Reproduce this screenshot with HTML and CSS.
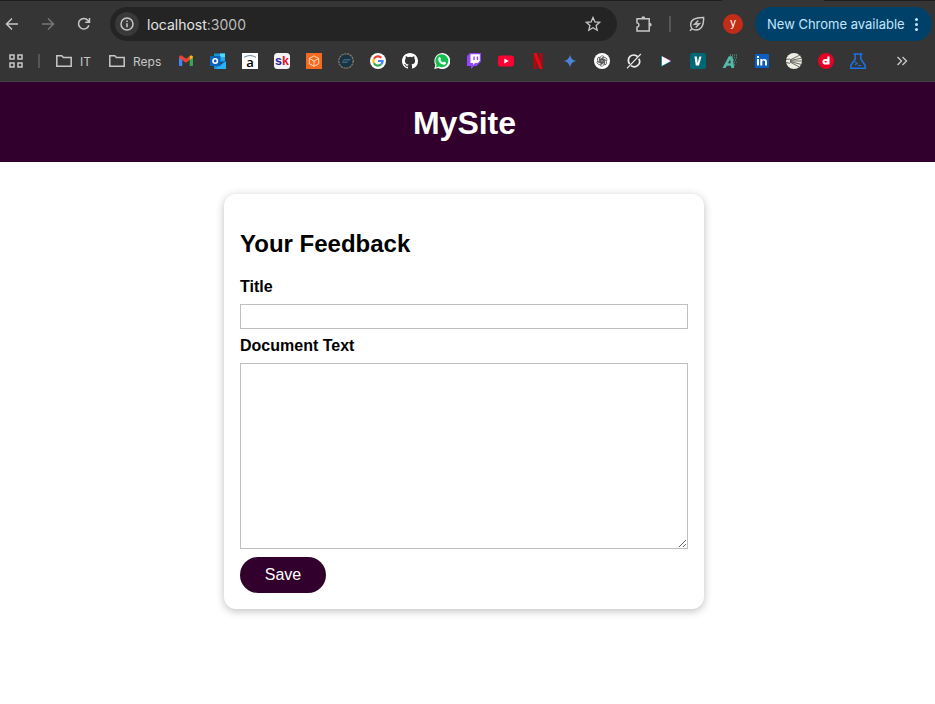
FILE: index.html
```html
<!DOCTYPE html>
<html lang="en">
<head>
<meta charset="utf-8">
<title>MySite</title>
<link rel="stylesheet" href="styles.css">
</head>
<body>
<div class="browser">
  <div class="toolbar">
    <div class="nav">
      <svg class="ic" viewBox="0 0 16 16"><path d="M14 8H3M8 2.500 2.500 8 8 13.500"/></svg>
      <svg class="ic dim" viewBox="0 0 16 16"><path d="M2 8h11M8 2.500 13.500 8 8 13.500"/></svg>
      <svg class="ic" viewBox="0 0 16 16"><path d="M12.900 9.300A5.300 5.300 0 1 1 12 4.500l1.200 1.500M13.500 2v4.200H9.300"/></svg>
    </div>
    <div class="address">
      <span class="info"><svg class="ic" viewBox="0 0 16 16"><circle cx="8" cy="8" r="6"/><path d="M8 7.300v3.900M8 4.500v1.500"/></svg></span>
      <span class="url">localhost<span class="port">:3000</span></span>
      <svg class="ic star" viewBox="0 0 16 16"><path d="M8 1.500l1.900 4.400 4.800.4-3.600 3.200 1.100 4.700L8 11.700l-4.200 2.500 1.100-4.700L1.300 6.300l4.800-.4z"/></svg>
    </div>
    <svg class="puzzle" viewBox="0 0 18 18"><path d="M2 3.800h12.200v12.200H2v-3.800c2.600-.4 2.600-4 0-4.400z"/><path class="knob" d="M6.400 3.500a1.900 2.200 0 0 1 3.800 0zM14.500 7.800a2.200 1.900 0 0 1 0 3.800z"/></svg>
    <span class="divider"></span>
    <svg class="leaf" viewBox="0 0 16 16"><path d="M14.600 1.500C6 1.300 1.700 3.800 1.700 8.900c0 2.900 2.300 5 5.300 5 5.400 0 7.800-4.500 7.600-12.400zM1 14.800l2.200-2.300"/><path d="M9.300 4.600 5.700 8.300l4.600-.6-3.600 3.800"/></svg>
    <span class="avatar">y</span>
    <div class="update"><span>New Chrome available</span><i class="dots"></i></div>
  </div>
  <div class="bookmarks">
    <svg class="fav apps" viewBox="0 0 16 16"><path d="M2 2h4v4H2zM10 2h4v4h-4zM2 10h4v4H2zM10 10h4v4h-4z"/></svg>
    <span class="divider short"></span>
    <div class="folder f1"><svg viewBox="0 0 16 14"><path d="M.8 1.700h5l1.600 1.700h7.800v8.900H.8z"/></svg>IT</div>
    <div class="folder f2"><svg viewBox="0 0 16 14"><path d="M.8 1.700h5l1.600 1.700h7.800v8.900H.8z"/></svg>Reps</div>
    <div class="favs">
      <svg class="fav" viewBox="0 0 16 16"><path fill="#4285f4" d="M1 4l3.300 2.400v6.700H2a1 1 0 0 1-1-1z"/><path fill="#34a853" d="M11.700 6.400 15 4v8.100a1 1 0 0 1-1 1h-2.300z"/><path fill="#ea4335" d="M1 4.400C1 2.600 2.900 2 4.300 3L8 5.800 11.700 3v3.900L8 9.700 1 4.800z"/><path fill="#fbbc04" d="M11.700 3C13.100 2 15 2.600 15 4.400l-3.300 2.500z"/></svg>
      <svg class="fav" viewBox="0 0 16 16"><path fill="#1493df" d="M4 .5h11V9H4z"/><path fill="#50d9ff" d="M10 .5h5V4.500h-5z"/><path fill="#28a8ea" d="M10 4.500h5v4h-5z"/><path fill="#0a63bd" d="M9 8.500 15 8v3z"/><path fill="#1490df" d="M4 9l6 3 6-4v8H4z"/><path fill="#2cb1f0" d="M5 16l11-7.500V16z"/><path fill="#0a63bd" d="M0 3h10.500v10H0z"/><circle cx="5.200" cy="8" r="2.200" fill="none" stroke="#fff" stroke-width="1.600"/></svg>
      <svg class="fav" viewBox="0 0 16 16"><path fill="#fff" d="M0 0h16v16H0z"/><path d="M2 4.300Q8 .8 14 4.300" fill="none" stroke="#688ca3"/><text x="8" y="13.500" class="g a">a</text></svg>
      <svg class="fav" viewBox="0 0 16 16"><rect width="16" height="16" rx="3.500" fill="#f4f4f6"/><text x="8" y="12.200" class="g sk"><tspan fill="#272399">s</tspan><tspan fill="#e3132c">k</tspan></text></svg>
      <svg class="fav" viewBox="0 0 16 16"><path fill="#f26b21" d="M0 0h16v16H0z"/><path d="M8 2.800l4.700 2.600v5.300L8 13.300l-4.700-2.600V5.400zM3.300 5.400 8 8l4.700-2.600M8 8v5.300" fill="none" stroke="#ffd8b9"/></svg>
      <svg class="fav" viewBox="0 0 16 16"><circle cx="8" cy="8" r="7.200" fill="#173346" stroke="#8f8068" stroke-width="1.200" stroke-dasharray="2.200 .7"/><path d="M4.500 9.500l1.500-3h6.500M5.500 8h5l1.500-1.500M4 9.500h5.500" fill="none" stroke="#4c6c7e" stroke-width=".8"/></svg>
      <svg class="fav" viewBox="0 0 16 16"><circle cx="8" cy="8" r="8" fill="#fff"/><g fill="none" stroke-width="2.200"><path stroke="#ea4335" d="M4 5.700A4.600 4.600 0 0 1 11.300 4.800"/><path stroke="#fbbc05" d="M4 5.700a4.600 4.600 0 0 0 0 4.600"/><path stroke="#34a853" d="M4 10.300a4.600 4.600 0 0 0 7.200 1"/><path stroke="#4285f4" d="M11.200 11.300A4.600 4.600 0 0 0 12.600 8H8"/></g></svg>
      <svg class="fav" viewBox="0 0 16 16"><path fill="#fff" d="M8 0C3.580 0 0 3.580 0 8c0 3.540 2.290 6.530 5.470 7.590.4.070.55-.17.55-.38v-1.490c-2.010.37-2.530-.49-2.690-.94-.09-.23-.48-.94-.82-1.130-.28-.15-.68-.52-.01-.53.63-.01 1.080.58 1.230.82.72 1.210 1.870.87 2.330.66.070-.52.28-.87.51-1.070-1.780-.2-3.640-.89-3.640-3.950 0-.87.31-1.590.82-2.150-.08-.2-.36-1.020.08-2.120 0 0 .67-.21 2.200.82a7.600 7.600 0 0 1 4 0c1.530-1.040 2.200-.82 2.200-.82.44 1.100.16 1.920.08 2.120.51.56.82 1.270.82 2.150 0 3.070-1.870 3.750-3.650 3.950.29.25.54.73.54 1.480v2.200c0 .21.150.46.550.38A8 8 0 0 0 16 8c0-4.420-3.580-8-8-8z"/></svg>
      <svg class="fav" viewBox="0 0 16 16"><path fill="#fff" d="M.2 16l1.200-4A8 8 0 1 1 4.400 15z"/><path fill="#12bf4c" d="M1.800 14.400l.8-2.700A6.500 6.500 0 1 1 4.800 13.600z"/><path fill="#fff" d="M5 4.300l1-.2 1 2-.7 1c.7 1.200 1.500 1.900 2.800 2.500l.9-1 2 .9c0 3-2.700 2.600-4.900 1.300C4.800 9.500 3.300 6.300 5 4.300z"/></svg>
      <svg class="fav" viewBox="0 0 16 16"><path fill="#9146ff" d="M4 0h11v8.500L10.500 13H8l-3 3v-3H1V3z"/><path fill="#fff" d="M4.500 1.200h9.300V8L11.600 10H9l-2 2v-2H4.500z"/><path d="M8 3.500v3.400M11.500 3.500v3.400" stroke="#9146ff" stroke-width="1.400"/></svg>
      <svg class="fav" viewBox="0 0 16 16"><rect y="2.500" width="16" height="11" rx="2.800" fill="#ff0033"/><path fill="#fff" d="M6.300 5.500v5L10.700 8z"/></svg>
      <svg class="fav" viewBox="0 0 16 16"><path fill="#b20710" d="M3.500 0h3.200v16H3.500zM9.300 0h3.200v16H9.300z"/><path fill="#e50914" d="M3.500 0h3.200l5.800 16H9.300z"/></svg>
      <svg class="fav" viewBox="0 0 16 16"><defs><linearGradient id="gem"><stop stop-color="#4b7bd9"/><stop offset=".5" stop-color="#5380d8"/><stop offset="1" stop-color="#2598df"/></linearGradient></defs><path fill="url(#gem)" d="M8 1.500c.8 4 2.500 5.700 6.500 6.500-4 .8-5.700 2.500-6.500 6.500C7.200 10.500 5.500 8.800 1.500 8c4-.8 5.700-2.500 6.500-6.500z"/></svg>
      <svg class="fav" viewBox="0 0 16 16"><circle cx="8" cy="8" r="8" fill="#fff"/><g fill="none" stroke="#333" stroke-width=".65"><path id="petal" d="M6 9.100V5.100a2.300 2.300 0 0 1 4.100-1.400L7 5.600v3.500"/><use href="#petal" transform="rotate(60 8 8)"/><use href="#petal" transform="rotate(120 8 8)"/><use href="#petal" transform="rotate(180 8 8)"/><use href="#petal" transform="rotate(240 8 8)"/><use href="#petal" transform="rotate(300 8 8)"/></g></svg>
      <svg class="fav" viewBox="0 0 16 16"><g fill="none" stroke="#eee"><path stroke-width="1.700" d="M11.600 3.700A5.300 5.300 0 0 0 3.800 11M5 12.700A5.300 5.300 0 0 0 12.800 5.800"/><path stroke-width="1.100" d="M1 15.300 14.800 1"/></g></svg>
      <svg class="fav" viewBox="0 0 16 16"><path fill="#1baed1" d="M3.300 3v10.500L13 8.500z"/><path fill="#d22cb7" d="M3.300 2.500 13 7.500v1z"/><path fill="#fff" d="M4 3.300v9.400L12.500 8z"/></svg>
      <svg class="fav" viewBox="0 0 16 16"><rect width="16" height="16" rx="2.500" fill="#006875"/><path fill="#fff" d="M4.500 3.500h2.400L7.700 10 9.300 3.500h2.200L9 12.500H5.800z"/></svg>
      <svg class="fav" viewBox="0 0 16 16"><path fill="#53b9a8" fill-rule="evenodd" d="M.5 15 6.800 3.300h3.700L12.200 15H9.300l-.4-2.300H4.900L3.600 15zM6 10.300h2.700L8.200 6.500z"/><path d="M8 2h7M10 4.500h5M11 7h4M12 9.500h2.500M12 12h1" stroke="#468a80" stroke-width="1.300" stroke-dasharray="1 1"/></svg>
      <svg class="fav" viewBox="0 0 16 16"><rect x="1" y="1" width="14" height="14" rx="1" fill="#0a5fc1"/><path fill="#fff" d="M3 6h2v6.500H3zM3 3h2v2H3zM6.300 6h2v1c1-1.700 4.700-1.500 4.700 1.500v4h-2V9c0-2-2.700-1.800-2.700 0v3.500h-2z"/></svg>
      <svg class="fav" viewBox="0 0 16 16"><circle cx="8" cy="8" r="8" fill="#eeeee5"/><path d="M4 7 14 2M4 7.500l11.500-2.300M4 8h12M4 8.500l11.500 3M4 9l9.500 5M0 6.500l4-.5M0 9.500l4 .8" stroke="#484844" stroke-width=".8"/></svg>
      <svg class="fav" viewBox="0 0 16 16"><circle cx="8" cy="8" r="8" fill="#e60023"/><path d="M10.400 3.500v8" stroke="#fff" stroke-width="2.200"/><ellipse cx="7.700" cy="8.800" rx="2.300" ry="1.800" fill="none" stroke="#fff" stroke-width="2"/></svg>
      <svg class="fav" viewBox="0 0 16 16"><g fill="none" stroke="#1a73e8" stroke-width="1.500"><path d="M3.500.9h9M5.200 1v5L.8 12.500v2.700h14.400v-2.700L10.800 6V1"/><path stroke-width="1.200" d="M5 8.800l2 1.600-2 1.600M8 12.500h3"/></g></svg>
    </div>
    <svg class="more" viewBox="0 0 12 12"><path d="M1.500 2l4 4-4 4M6.500 2l4 4-4 4"/></svg>
  </div>
</div>
<header class="site-header"><h1>MySite</h1></header>
<main>
  <form class="card">
    <h2>Your Feedback</h2>
    <label for="title">Title</label>
    <input id="title" type="text">
    <label for="text">Document Text</label>
    <textarea id="text"></textarea>
    <button type="button">Save</button>
  </form>
</main>
</body>
</html>
```
FILE: styles.css
```css
* { box-sizing: border-box; }
body {
  margin: 0;
  height: 704px;
  overflow: hidden;
  background: #fff;
  color: #000;
  font-family: "Liberation Sans", Arial, sans-serif;
}
svg { display: block; flex: none; }

/* browser chrome */
.browser {
  height: 82px;
  padding-top: 7px;
  background:
    linear-gradient(90deg, #1e1e1e 722px, #353535 722px 824px, #1e1e1e 824px) top / 100% 1px no-repeat,
    #353535;
  border-bottom: 1px solid #414141;
  font-family: Inter, sans-serif;
}
.toolbar {
  display: flex;
  align-items: center;
  height: 34px;
}
.ic, .puzzle, .leaf, .apps, .folder svg, .more {
  fill: none;
  stroke: #c7c7c7;
  stroke-width: 1.5;
}
.ic { width: 16px; height: 16px; }
.dim { stroke: #777; }
.nav { display: flex; gap: 20px; margin-left: 4px; }
.address {
  display: flex;
  align-items: center;
  width: 507px;
  height: 34px;
  margin-left: 18px;
  padding: 0 16px 0 5px;
  border-radius: 17px;
  background: #242424;
}
.info {
  display: grid;
  place-items: center;
  width: 24px;
  height: 24px;
  border-radius: 50%;
  background: #393939;
}
.url {
  margin-left: 8px;
  color: #e5e5e5;
  font-size: 14px;
}
.port { color: #bdbdbd; }
.star { margin-left: auto; stroke-width: 1.3; }
.puzzle { width: 18px; height: 18px; margin-left: 18px; }
.knob { fill: #c7c7c7; stroke: none; }
.divider { width: 2px; height: 16px; margin-left: 16px; background: #565656; }
.leaf { width: 16px; height: 16px; margin-left: 18px; }
.avatar {
  width: 20px;
  height: 20px;
  margin-left: 18px;
  border-radius: 50%;
  background: #c22d18;
  color: #fff;
  font-size: 11px;
  line-height: 18px;
  text-align: center;
}
.update {
  display: flex;
  align-items: center;
  justify-content: space-between;
  width: 177px;
  height: 34px;
  margin-left: 12px;
  padding: 0 14px 0 12px;
  border-radius: 17px;
  background: #00416a;
  color: #c2e7ff;
  font-size: 13px;
  white-space: nowrap;
}
.dots {
  width: 3px;
  height: 3px;
  border-radius: 50%;
  background: #c2e7ff;
  box-shadow: 0 -5px #c2e7ff, 0 5px #c2e7ff;
}
.bookmarks {
  display: flex;
  align-items: center;
  height: 16px;
  margin-top: 12px;
  padding-left: 8px;
  color: #c7c7c7;
  font-size: 12px;
}
.fav { width: 16px; height: 16px; }
.short { height: 14px; margin-left: 14px; }
.folder { display: flex; align-items: center; gap: 8px; }
.folder svg { width: 16px; height: 14px; }
.f1 { width: 53px; margin-left: 16px; }
.f2 { width: 69px; }
.favs { display: flex; gap: 16px; }
.more { width: 12px; height: 12px; margin-left: 30px; stroke-width: 1.4; }
.g { text-anchor: middle; font-family: "Open Sans", sans-serif; font-weight: 600; }
.a { font-size: 13px; }
.sk { font-family: "Liberation Sans", sans-serif; font-size: 12.5px; font-weight: 700; }

/* page */
.site-header {
  display: flex;
  align-items: center;
  justify-content: center;
  height: 80px;
  padding: 2px 6px 0 0;
  background: #31002c;
  color: #fff;
}
h1 { margin: 0; font-size: 32px; line-height: 36px; }
main { padding: 32px 7px 0 0; }
.card {
  width: 480px;
  height: 415px;
  margin: 0 auto;
  padding: 36px 16px 16px;
  border-radius: 12px;
  box-shadow: 0 2px 8px rgba(0, 0, 0, .26);
}
h2 { margin: 0 0 19px; font-size: 24px; line-height: 28px; }
label { display: block; font-size: 16px; font-weight: 700; line-height: 19px; }
input, textarea {
  display: block;
  width: 100%;
  margin: 8px 0 7px;
  border: 1px solid #bfbfbf;
  border-radius: 0;
  background: #fff;
  font: inherit;
}
input { height: 25px; }
textarea { height: 186px; margin-bottom: 8px; resize: vertical; }
button {
  display: block;
  width: 86px;
  height: 36px;
  padding: 0;
  border: 0;
  border-radius: 18px;
  background: #31002c;
  color: #fff;
  font: 16px "Liberation Sans", Arial, sans-serif;
}
```
